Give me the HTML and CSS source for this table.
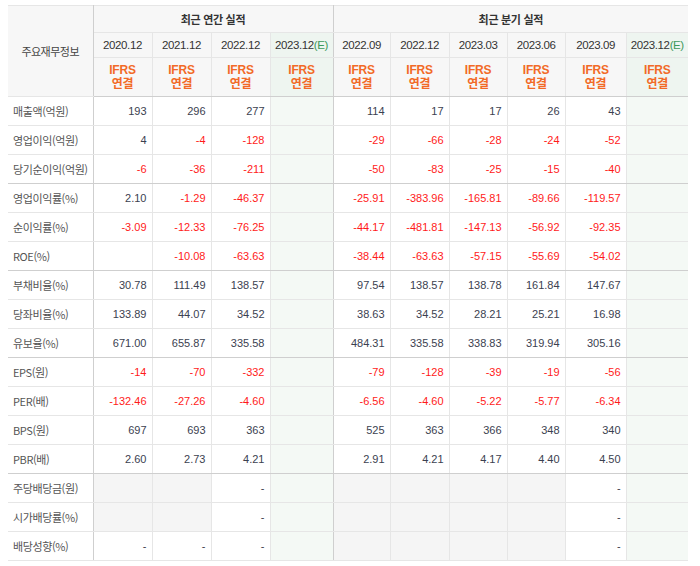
FILE: index.html
```html
<!DOCTYPE html>
<html lang="ko">
<head>
<meta charset="utf-8">
<link rel="stylesheet" href="styles.css">
</head>
<body>
<table class="fin">
  <colgroup>
    <col class="c-label">
    <col class="c59"><col class="c59"><col class="c59"><col class="c63">
    <col class="c57"><col class="c59"><col class="c58"><col class="c58"><col class="c61"><col class="c62">
  </colgroup>
  <thead>
    <tr class="h1">
      <th class="lab-head" rowspan="3">주요재무정보</th>
      <th class="grp sep" colspan="4">최근 연간 실적</th>
      <th class="grp" colspan="6">최근 분기 실적</th>
    </tr>
    <tr class="h2">
      <th>2020.12</th><th>2021.12</th><th>2022.12</th><th class="est sep">2023.12<span class="e">(E)</span></th>
      <th>2022.09</th><th>2022.12</th><th>2023.03</th><th>2023.06</th><th>2023.09</th><th class="est">2023.12<span class="e">(E)</span></th>
    </tr>
    <tr class="h3">
      <th class="ifrs">IFRS<br>연결</th><th class="ifrs">IFRS<br>연결</th><th class="ifrs">IFRS<br>연결</th><th class="ifrs est sep">IFRS<br>연결</th>
      <th class="ifrs">IFRS<br>연결</th><th class="ifrs">IFRS<br>연결</th><th class="ifrs">IFRS<br>연결</th><th class="ifrs">IFRS<br>연결</th><th class="ifrs">IFRS<br>연결</th><th class="ifrs est">IFRS<br>연결</th>
    </tr>
  </thead>
  <tbody>
    <tr><th>매출액(억원)</th><td>193</td><td>296</td><td>277</td><td class="est sep"></td><td>114</td><td>17</td><td>17</td><td>26</td><td>43</td><td class="est"></td></tr>
    <tr><th>영업이익(억원)</th><td>4</td><td class="neg">-4</td><td class="neg">-128</td><td class="est sep"></td><td class="neg">-29</td><td class="neg">-66</td><td class="neg">-28</td><td class="neg">-24</td><td class="neg">-52</td><td class="est"></td></tr>
    <tr class="gend"><th>당기순이익(억원)</th><td class="neg">-6</td><td class="neg">-36</td><td class="neg">-211</td><td class="est sep"></td><td class="neg">-50</td><td class="neg">-83</td><td class="neg">-25</td><td class="neg">-15</td><td class="neg">-40</td><td class="est"></td></tr>

    <tr><th>영업이익률(%)</th><td>2.10</td><td class="neg">-1.29</td><td class="neg">-46.37</td><td class="est sep"></td><td class="neg">-25.91</td><td class="neg">-383.96</td><td class="neg">-165.81</td><td class="neg">-89.66</td><td class="neg">-119.57</td><td class="est"></td></tr>
    <tr><th>순이익률(%)</th><td class="neg">-3.09</td><td class="neg">-12.33</td><td class="neg">-76.25</td><td class="est sep"></td><td class="neg">-44.17</td><td class="neg">-481.81</td><td class="neg">-147.13</td><td class="neg">-56.92</td><td class="neg">-92.35</td><td class="est"></td></tr>
    <tr class="gend"><th>ROE(%)</th><td></td><td class="neg">-10.08</td><td class="neg">-63.63</td><td class="est sep"></td><td class="neg">-38.44</td><td class="neg">-63.63</td><td class="neg">-57.15</td><td class="neg">-55.69</td><td class="neg">-54.02</td><td class="est"></td></tr>

    <tr><th>부채비율(%)</th><td>30.78</td><td>111.49</td><td>138.57</td><td class="est sep"></td><td>97.54</td><td>138.57</td><td>138.78</td><td>161.84</td><td>147.67</td><td class="est"></td></tr>
    <tr><th>당좌비율(%)</th><td>133.89</td><td>44.07</td><td>34.52</td><td class="est sep"></td><td>38.63</td><td>34.52</td><td>28.21</td><td>25.21</td><td>16.98</td><td class="est"></td></tr>
    <tr class="gend"><th>유보율(%)</th><td>671.00</td><td>655.87</td><td>335.58</td><td class="est sep"></td><td>484.31</td><td>335.58</td><td>338.83</td><td>319.94</td><td>305.16</td><td class="est"></td></tr>

    <tr><th>EPS(원)</th><td class="neg">-14</td><td class="neg">-70</td><td class="neg">-332</td><td class="est sep"></td><td class="neg">-79</td><td class="neg">-128</td><td class="neg">-39</td><td class="neg">-19</td><td class="neg">-56</td><td class="est"></td></tr>
    <tr><th>PER(배)</th><td class="neg">-132.46</td><td class="neg">-27.26</td><td class="neg">-4.60</td><td class="est sep"></td><td class="neg">-6.56</td><td class="neg">-4.60</td><td class="neg">-5.22</td><td class="neg">-5.77</td><td class="neg">-6.34</td><td class="est"></td></tr>
    <tr><th>BPS(원)</th><td>697</td><td>693</td><td>363</td><td class="est sep"></td><td>525</td><td>363</td><td>366</td><td>348</td><td>340</td><td class="est"></td></tr>
    <tr class="gend"><th>PBR(배)</th><td>2.60</td><td>2.73</td><td>4.21</td><td class="est sep"></td><td>2.91</td><td>4.21</td><td>4.17</td><td>4.40</td><td>4.50</td><td class="est"></td></tr>

    <tr><th>주당배당금(원)</th><td class="na"></td><td class="na"></td><td>-</td><td class="est sep"></td><td class="na"></td><td class="na"></td><td class="na"></td><td class="na"></td><td>-</td><td class="est"></td></tr>
    <tr><th>시가배당률(%)</th><td class="na"></td><td class="na"></td><td>-</td><td class="est sep"></td><td class="na"></td><td class="na"></td><td class="na"></td><td class="na"></td><td>-</td><td class="est"></td></tr>
    <tr class="last"><th>배당성향(%)</th><td>-</td><td>-</td><td>-</td><td class="est sep"></td><td class="na"></td><td class="na"></td><td class="na"></td><td class="na"></td><td>-</td><td class="est"></td></tr>
  </tbody>
</table>
</body>
</html>
```

FILE: styles.css
```css
html, body {
  margin: 0;
  padding: 0;
  background: #fff;
}

body {
  padding: 5px 0 0 8px;
  font-family: "Liberation Sans", "Noto Sans CJK KR", sans-serif;
}

.fin {
  width: 680px;
  table-layout: fixed;
  border-collapse: collapse;
  border-top: 1px solid #c8c8c8;
  border-bottom: 1px solid #c8c8c8;
  font-size: 11px;
  color: #333;
}

.c-label { width: 85px; }
.c57 { width: 57px; }
.c58 { width: 58px; }
.c59 { width: 59px; }
.c61 { width: 61px; }
.c62 { width: 62px; }
.c63 { width: 63px; }

.fin th,
.fin td {
  border: 1px solid #e6e6e6;
  padding: 0;
  font-weight: normal;
}

.fin tr > :first-child { border-left: none; }
.fin tr > :last-child { border-right: none; }

/* header */
.fin thead th {
  background: #f7f7f7;
  text-align: center;
  color: #333;
}

.fin .lab-head {
  font-family: "Noto Sans CJK KR", sans-serif;
  font-size: 11px;
  letter-spacing: -0.5px;
  color: #444;
  border-right: 1px solid #cfcfcf;
}

.h1 th { height: 26px; }
.h1 .grp {
  font-family: "Noto Sans CJK KR", sans-serif;
  font-weight: bold;
  font-size: 11px;
  letter-spacing: -0.3px;
  color: #333;
}

.h2 th {
  height: 24px;
  font-size: 11.5px;
  letter-spacing: -0.4px;
  color: #333;
}

.h3 th {
  height: 38px;
  border-bottom: 1px solid #cfcfcf;
}

.fin .ifrs {
  font-family: "Liberation Sans", "Noto Sans CJK KR", sans-serif;
  font-weight: bold;
  font-size: 12px;
  line-height: 14px;
  color: #f26a27;
  letter-spacing: -0.2px;
}

.fin thead .est { background: #eef5f0; }
.fin tbody .est { background: #f4f9f5; }

.e { color: #3d9a5c; }

.fin .sep { border-right: 1px solid #cfcfcf; }

/* body */
.fin tbody th {
  height: 28px;
  text-align: left;
  padding-left: 5px;
  font-family: "Noto Sans CJK KR", sans-serif;
  font-size: 11px;
  letter-spacing: -0.4px;
  color: #555;
  background: #fff;
  border-right: 1px solid #cfcfcf;
}

.fin tbody td {
  height: 28px;
  text-align: right;
  padding-right: 5px;
  color: #3b4150;
  vertical-align: middle;
}

.fin tbody td.neg { color: #ff1a1a; }

.fin tbody td.na { background: #f5f5f5; }

.fin tbody tr.gend > * { border-bottom: 1px solid #cfcfcf; }
```
